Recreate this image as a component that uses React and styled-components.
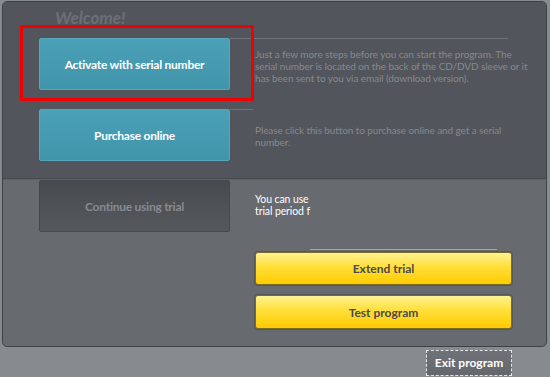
import styled, { createGlobalStyle, css } from "styled-components";

const GlobalStyle = createGlobalStyle`
  html, body {
    margin: 0;
    padding: 0;
    background: #878b90;
  }
  body {
    font-family: Lato, "Open Sans", sans-serif;
  }
`;

const Window = styled.div`
  position: relative;
  width: 550px;
  height: 377px;
  box-sizing: border-box;
  padding: 1px 3px 0 2px;
  display: flex;
  flex-direction: column;
  background: #878b90;
  overflow: hidden;
`;

const Highlight = styled.div`
  position: absolute;
  left: 20px;
  top: 25px;
  width: 234px;
  height: 76px;
  box-sizing: border-box;
  border: 3px solid #f00000;
  pointer-events: none;
`;

const Panel = styled.div`
  height: 346px;
  box-sizing: border-box;
  border: 1px solid #3f4247;
  border-radius: 5px;
  display: flex;
  flex-direction: column;
  overflow: hidden;
  background: #676a6f;
`;

const TopSection = styled.div`
  height: 177px;
  background: #52555b;
  border-bottom: 1px solid #474a4f;
  padding: 0 0 0 36px;
  box-sizing: border-box;
  display: flex;
  flex-direction: column;
`;

const BottomSection = styled.div`
  flex: 1;
  padding: 0 0 0 36px;
  border-top: 1px solid #5f6267;
  display: flex;
  flex-direction: column;
`;

const Title = styled.h1`
  margin: 8px 0 0 16px;
  height: 28px;
  font-size: 17px;
  font-weight: 700;
  font-style: italic;
  color: #6c7076;
  line-height: 16px;
`;

const Row = styled.div`
  display: grid;
  grid-template-columns: 191px 1fr;
  margin-bottom: ${(p) => p.$gap || 0}px;
`;

const baseButton = css`
  width: 191px;
  height: 52px;
  box-sizing: border-box;
  border-radius: 2px;
  font-family: Lato, sans-serif;
  font-size: 12px;
  font-weight: 700;
  letter-spacing: -0.25px;
  cursor: pointer;
  padding: 0;
`;

const TealButton = styled.button`
  ${baseButton}
  color: #ffffff;
  background: linear-gradient(#4aa0b7, #4195ab);
  border: 1px solid #56a7bb;
`;

const TrialButton = styled.button`
  ${baseButton}
  color: #878b91;
  background: linear-gradient(#474a4f, #55585d);
  border: 1px solid #45484d;
`;

const Description = styled.div`
  position: relative;
  padding: ${(p) => p.$top || 9}px 0 0 25px;
  font-size: ${(p) => (p.$light ? 10.5 : 10)}px;
  line-height: 12px;
  letter-spacing: -0.1px;
  color: ${(p) => (p.$light ? "#ffffff" : "#858a90")};

  &::before {
    content: "";
    position: absolute;
    left: 0;
    top: 0;
    width: ${(p) => p.$line}px;
    height: 1px;
    background: #6f737a;
  }
`;

const RightColumn = styled.div`
  display: flex;
  flex-direction: column;
  width: 257px;
  margin-left: 216px;
  margin-top: 17px;
`;

const Separator = styled.div`
  height: 1px;
  margin: 0 15px 2px 55px;
  background: #a3a6aa;
`;

const YellowButton = styled.button`
  height: ${(p) => p.$h}px;
  margin-bottom: 10px;
  box-sizing: border-box;
  border: 1px solid #7a6d2c;
  border-radius: 3px;
  box-shadow: 0 0 0 1px #55585c;
  background: linear-gradient(#fff291 0%, #ffdf3a 45%, #ffcb00 100%);
  color: #4b4b4b;
  font-family: Lato, sans-serif;
  font-size: 12px;
  font-weight: 700;
  cursor: pointer;
`;

const Footer = styled.div`
  flex: 1;
  display: flex;
  justify-content: flex-end;
  align-items: center;
  padding-right: 35px;
`;

const ExitButton = styled.button`
  width: 86px;
  height: 26px;
  margin-top: 1px;
  box-sizing: border-box;
  border: 1px dashed #e6e7e8;
  background: linear-gradient(#6f7277, #64676c);
  color: #ffffff;
  font-family: Lato, sans-serif;
  font-size: 12px;
  font-weight: 700;
  cursor: pointer;
`;

export default function App() {
  return (
    <Window>
      <GlobalStyle />
      <Panel>
        <TopSection>
          <Title>Welcome!</Title>
          <Row $gap={19}>
            <TealButton>Activate with serial number</TealButton>
            <Description $line={278} $top={10}>
              Just a few more steps before you can start the program. The
              <br />
              serial number is located on the back of the CD/DVD sleeve or it
              <br />
              has been sent to you via email (download version).
            </Description>
          </Row>
          <Row>
            <TealButton>Purchase online</TealButton>
            <Description $line={23} $top={15}>
              Please click this button to purchase online and get a serial
              <br />
              number.
            </Description>
          </Row>
        </TopSection>
        <BottomSection>
          <Row>
            <TrialButton>Continue using trial</TrialButton>
            <Description $line={0} $top={13} $light>
              You can use
              <br />
              trial period f
            </Description>
          </Row>
          <RightColumn>
            <Separator />
            <YellowButton $h={33}>Extend trial</YellowButton>
            <YellowButton $h={34}>Test program</YellowButton>
          </RightColumn>
        </BottomSection>
      </Panel>
      <Footer>
        <ExitButton>Exit program</ExitButton>
      </Footer>
      <Highlight />
    </Window>
  );
}
